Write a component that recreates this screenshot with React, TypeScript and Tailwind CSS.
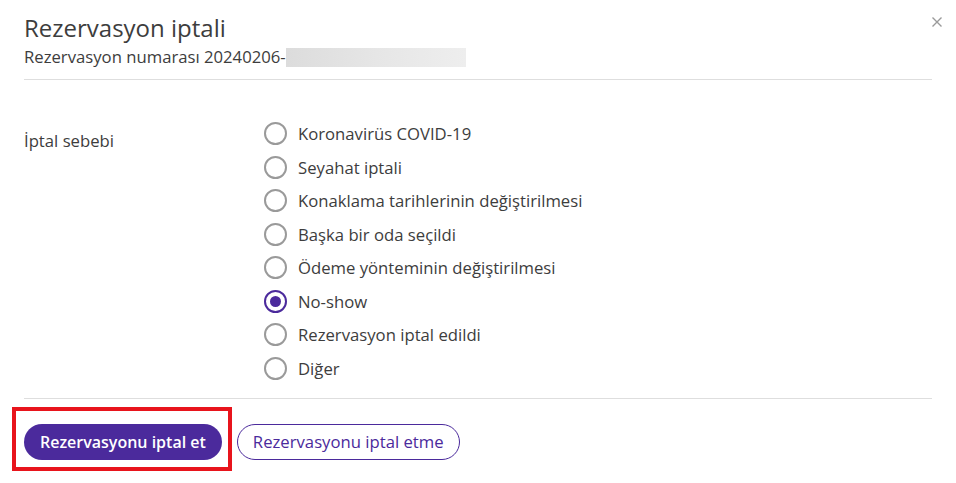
const reasons = [
  "Koronavirüs COVID-19",
  "Seyahat iptali",
  "Konaklama tarihlerinin değiştirilmesi",
  "Başka bir oda seçildi",
  "Ödeme yönteminin değiştirilmesi",
  "No-show",
  "Rezervasyon iptal edildi",
  "Diğer",
];

function Radio({ checked }: { checked: boolean }) {
  return checked ? (
    <span className="flex h-[23px] w-[23px] items-center justify-center rounded-full border-2 border-[#4b2a9c]">
      <span className="h-[11px] w-[11px] rounded-full bg-[#4b2a9c]" />
    </span>
  ) : (
    <span className="h-[23px] w-[23px] rounded-full border-2 border-[#9a9a9a]" />
  );
}

export default function App() {
  return (
    <div className="h-[483px] w-[956px] bg-white px-6 font-['Open_Sans',sans-serif] text-[#3d3d3d]">
      <div className="relative border-b border-[#dedede] pb-[10px] pt-[11px]">
        <h1 className="text-[24px] leading-[34px]">Rezervasyon iptali</h1>
        <div className="flex items-center text-[16.7px] leading-[24px]">
          <span>Rezervasyon numarası 20240206-</span>
          <span className="h-[19px] w-[180px] bg-gradient-to-r from-[#dcdcdc] via-[#e6e6e6] to-[#eeeeee]" />
        </div>
        <button className="absolute -right-[12px] top-[15px] text-[#9a9a9a]">
          <svg width="14" height="14" viewBox="0 0 14 14" fill="none" stroke="currentColor" strokeWidth="1.4">
            <path d="M2.5 2.5l9 9M11.5 2.5l-9 9" />
          </svg>
        </button>
      </div>

      <div className="grid grid-cols-[240px_1fr] border-b border-[#dedede] pb-[13px] pt-[37px]">
        <div className="pt-[12px] text-[16.7px] leading-[24px]">İptal sebebi</div>
        <div className="flex flex-col">
          {reasons.map((r) => (
            <label key={r} className="flex h-[33.5px] items-center gap-[11px] text-[16.7px]">
              <Radio checked={r === "No-show"} />
              <span>{r}</span>
            </label>
          ))}
        </div>
      </div>

      <div className="flex items-center gap-[15px] pt-[25px]">
        <div className="relative">
          <button className="h-[36px] rounded-full bg-[#4b2a9c] px-[16px] text-[16px] font-semibold text-white">
            Rezervasyonu iptal et
          </button>
          <span className="pointer-events-none absolute -bottom-[11px] -left-[12px] -right-[10px] -top-[17px] border-4 border-[#e8141c]" />
        </div>
        <button className="h-[36px] rounded-full border border-[#4b2a9c] px-[15px] text-[16.7px] text-[#4b2a9c]">
          Rezervasyonu iptal etme
        </button>
      </div>
    </div>
  );
}
